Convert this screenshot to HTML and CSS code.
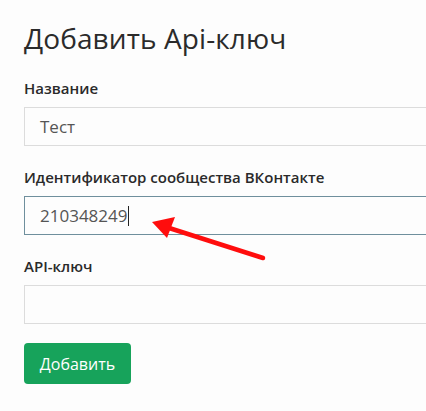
FILE: index.html
```html
<!DOCTYPE html>
<html lang="ru">
<head>
<meta charset="utf-8">
<link rel="stylesheet" href="styles.css">
</head>
<body>
<div class="page">
  <h1 class="title">Добавить Api-ключ</h1>
  <form class="form">
    <div class="field">
      <label class="label">Название</label>
      <div class="input">Тест</div>
    </div>
    <div class="field">
      <label class="label">Идентификатор сообщества ВКонтакте</label>
      <div class="input focus">210348249<span class="caret"></span></div>
    </div>
    <div class="field">
      <label class="label">API-ключ</label>
      <div class="input"></div>
    </div>
    <button type="button" class="btn">Добавить</button>
  </form>
  <svg class="arrow" width="426" height="411" viewBox="0 0 426 411">
    <line x1="263" y1="258" x2="166" y2="227" stroke="#ff0d0d" stroke-width="4.5" stroke-linecap="round"/>
    <polygon points="152,222 175,217 167,238" fill="#ff0d0d"/>
  </svg>
</div>
</body>
</html>
```
FILE: styles.css
```css
html, body {
  margin: 0;
  padding: 0;
  background: #fdfdfd;
  overflow: hidden;
}
.page {
  position: relative;
  width: 426px;
  height: 411px;
  padding-left: 24px;
  box-sizing: border-box;
  font-family: "Open Sans", "Noto Sans", sans-serif;
  color: #262626;
}
.title {
  margin: 0;
  padding-top: 20px;
  font-size: 28px;
  font-weight: 400;
  line-height: 36px;
  color: #2b2b2b;
  letter-spacing: 0.1px;
}
.form {
  display: flex;
  flex-direction: column;
  align-items: flex-start;
  width: 420px;
  margin-top: 22px;
}
.field {
  display: flex;
  flex-direction: column;
  width: 100%;
  height: 89px;
}
.label {
  display: block;
  height: 20px;
  font-size: 15px;
  font-weight: 600;
  line-height: 20px;
  color: #2a2a2a;
  margin-bottom: 9px;
}
.input {
  box-sizing: border-box;
  width: 100%;
  height: 39px;
  border: 1.5px solid #dcdcdc;
  background: #fdfdfd;
  padding-left: 15px;
  display: flex;
  align-items: center;
  font-size: 17px;
  color: #555;
}
.input.focus {
  border-color: #6f8f9d;
}
.caret {
  display: inline-block;
  width: 1px;
  height: 20px;
  background: #222;
  margin-left: 1px;
}
.btn {
  margin-top: -2px;
  width: 107px;
  height: 41px;
  border: none;
  border-radius: 4px;
  background: #17a35b;
  color: #fff;
  font-family: "Open Sans", "Noto Sans", sans-serif;
  font-size: 16px;
  font-weight: 500;
  padding: 0;
}
.arrow {
  position: absolute;
  left: 0;
  top: 0;
  pointer-events: none;
}
```
